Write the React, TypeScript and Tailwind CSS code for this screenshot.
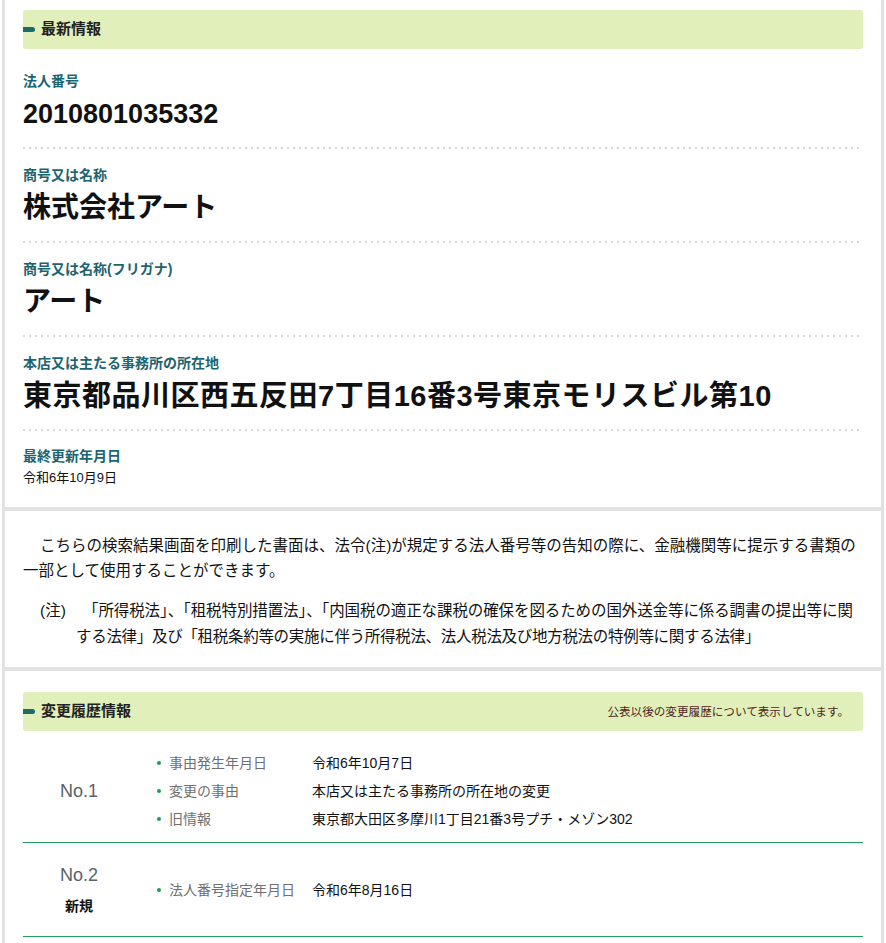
const FONT = "font-['Liberation_Sans','Noto_Sans_CJK_JP',sans-serif]";

function SectionBar({ title, note }: { title: string; note?: string }) {
  return (
    <div className="flex h-[39px] items-center rounded-[3px] bg-[#e1f0bb] pr-[20px]">
      <span className="h-[5px] w-[12px] rounded-r-full bg-[#1d6b6b]" />
      <h2 className="ml-[6px] text-[15px] font-bold text-[#222]">{title}</h2>
      {note && <p className="ml-auto -mr-[6px] text-[11.6px] text-[#4e2420]">{note}</p>}
    </div>
  );
}

function Dots() {
  return (
    <div className="h-[2px] bg-[linear-gradient(to_right,#d6d6d6_2px,transparent_2px)] bg-[length:6px_2px]" />
  );
}

const FIELDS = [
  { label: "法人番号", value: "2010801035332", size: "text-[27px]" },
  { label: "商号又は名称", value: "株式会社アート", size: "text-[28px]" },
  { label: "商号又は名称(フリガナ)", value: "アート", size: "text-[28px]" },
  {
    label: "本店又は主たる事務所の所在地",
    value: "東京都品川区西五反田7丁目16番3号東京モリスビル第10",
    size: "text-[29px] tracking-[0.5px]",
  },
];

const HISTORY = [
  {
    no: "No.1",
    tag: "",
    items: [
      ["事由発生年月日", "令和6年10月7日"],
      ["変更の事由", "本店又は主たる事務所の所在地の変更"],
      ["旧情報", "東京都大田区多摩川1丁目21番3号プチ・メゾン302"],
    ],
  },
  {
    no: "No.2",
    tag: "新規",
    items: [["法人番号指定年月日", "令和6年8月16日"]],
  },
];

export default function App() {
  return (
    <div className={`min-h-[943px] bg-white pl-[2px] text-[#111] ${FONT}`}>
      <div className="w-[882px] border-x-[3px] border-[#e2e2e2]">
        {/* 最新情報 */}
        <section className="pl-[18px] pr-[18px] pt-[10px]">
          <SectionBar title="最新情報" />
          {FIELDS.map((f, i) => (
            <div key={f.label}>
              <div className={i === 0 ? "pt-[22px] pb-[17px]" : "pt-[16px] pb-[17px]"}>
                <p className="text-[14px] font-bold leading-[20px] text-[#1b6470]">{f.label}</p>
                <p className={`mt-[7px] font-bold leading-[32px] whitespace-nowrap ${f.size}`}>{f.value}</p>
              </div>
              <Dots />
            </div>
          ))}
          <div className="pt-[15px] pb-[19px]">
            <p className="text-[14px] font-bold leading-[20px] text-[#1b6470]">最終更新年月日</p>
            <p className="mt-[2px] text-[13px] leading-[20px]">令和6年10月9日</p>
          </div>
        </section>

        <div className="h-[4px] bg-[#e2e2e2]" />

        {/* 注意書き */}
        <section className="pl-[18px] pr-[18px] pt-[22px] pb-[17px] text-[15.5px]">
          <p className="indent-[17px] leading-[25px] whitespace-nowrap">
            こちらの検索結果画面を印刷した書面は、法令(注)が規定する法人番号等の告知の際に、金融機関等に提示する書類の
            <br />
            一部として使用することができます。
          </p>
          <p className="mt-[15px] pl-[53px] -indent-[36px] leading-[26px] whitespace-nowrap">
            <span className="inline-block w-[43px] indent-0">(注)</span>
            <span className="tracking-[-0.1px]">
              「所得税法」、「租税特別措置法」、「内国税の適正な課税の確保を図るための国外送金等に係る調書の提出等に関
            </span>
            <br />
            <span className="tracking-[-0.3px]">
              する法律」及び「租税条約等の実施に伴う所得税法、法人税法及び地方税法の特例等に関する法律」
            </span>
          </p>
        </section>

        <div className="h-[4px] bg-[#e2e2e2]" />

        {/* 変更履歴情報 */}
        <section className="pl-[18px] pr-[18px] pt-[21px] pb-[7px]">
          <SectionBar title="変更履歴情報" note="公表以後の変更履歴について表示しています。" />
          {HISTORY.map((h, idx) => (
            <div
              key={h.no}
              className={`flex items-center border-b border-[#21a060] ${
                idx === 0 ? "pt-[18px] pb-[9px]" : "min-h-[94px]"
              }`}
            >
              <div className="flex w-[112px] flex-col items-center">
                <span className="text-[18px] leading-[24px] text-[#56646c]">{h.no}</span>
                {h.tag && <span className="mt-[9px] text-[14px] font-bold leading-[20px]">{h.tag}</span>}
              </div>
              <ul className="pl-[34px] text-[14px] leading-[28px]">
                {h.items.map(([k, v]) => (
                  <li key={k} className="grid grid-cols-[143px_1fr] items-center">
                    <span className="relative text-[#707070]">
                      <span className="absolute left-[-12px] top-[12px] h-[4px] w-[4px] rounded-full bg-[#1f9b5a]" />
                      {k}
                    </span>
                    <span className="whitespace-nowrap">{v}</span>
                  </li>
                ))}
              </ul>
            </div>
          ))}
        </section>
      </div>
    </div>
  );
}
